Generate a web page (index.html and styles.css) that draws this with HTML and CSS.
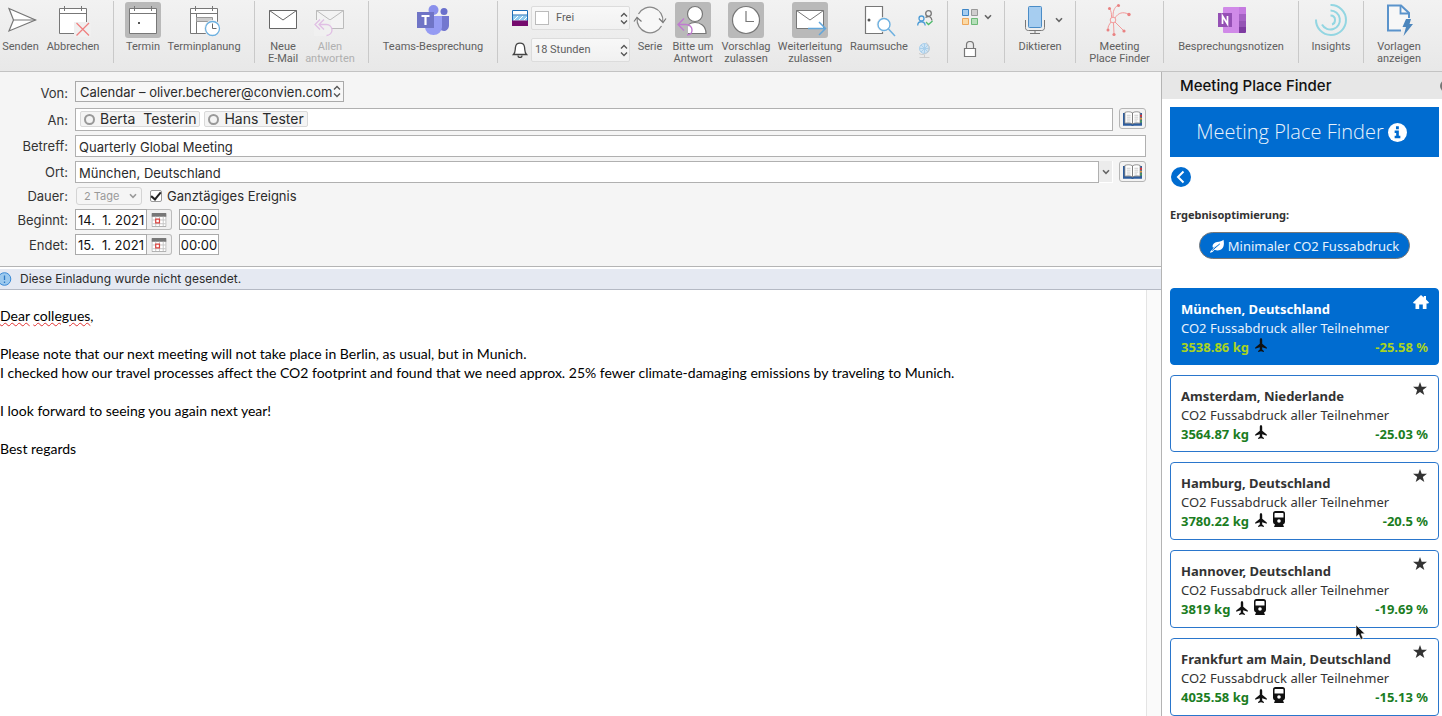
FILE: index.html
```html
<!DOCTYPE html>
<html lang="de">
<head>
<meta charset="utf-8">
<title>Quarterly Global Meeting</title>
<link rel="stylesheet" href="styles.css">
</head>
<body>
<svg class="defs" aria-hidden="true">
  <symbol id="plane" viewBox="0 0 12 14"><path d="M6 0c.8 0 1.200 1 1.200 2v3.800l4.600 3.700v1.300L7.200 9.300v2.300l1.700 1.400v1L6 13.200l-2.900.8v-1l1.700-1.400V9.300L.2 10.800V9.500L4.800 5.800V2C4.800 1 5.200 0 6 0z"/></symbol>
  <symbol id="train" viewBox="0 0 12 16"><path fill-rule="evenodd" d="M2.500 0h7A2.500 2.500 0 0 1 12 2.500V11a2.500 2.500 0 0 1-2 2.400L11 16H1L2 13.400A2.500 2.500 0 0 1 0 11V2.500A2.500 2.500 0 0 1 2.500 0zM2.200 2a.7.7 0 0 0-.7.7V6.500h9V2.700a.7.700 0 0 0-.7-.7zM6 8.200a1.800 1.800 0 1 0 0 3.600 1.800 1.800 0 0 0 0-3.600z"/></symbol>
  <symbol id="star" viewBox="0 0 14 13"><path d="M7 0l1.700 4.800H14L9.800 7.900l1.500 5L7 9.900l-4.300 3 1.500-5L0 4.800h5.300z"/></symbol>
  <symbol id="updown" viewBox="0 0 8 13"><path d="M1 4.500l3-3 3 3M1 8.500l3 3 3-3" fill="none" stroke="currentColor" stroke-width="1.300"/></symbol>
  <symbol id="down" viewBox="0 0 8 6"><path d="M1 1.300l3 3 3-3" fill="none" stroke="currentColor" stroke-width="1.600"/></symbol>
  <symbol id="book" viewBox="0 0 20 16"><path d="M0 2h3v11h6l1 1 1-1h6V2h3v13.500h-8.500l-1.500.5-1.500-.5H0z" fill="#2c5c9e"/><path d="M2 1.500C4.500.5 8 .5 10 2c2-1.500 5.500-1.500 8-.5v11.500c-3-.8-6-.8-8 .8-2-1.600-5-1.600-8-.8z" fill="#fff" stroke="#777" stroke-width=".8"/><path d="M10 2v11.500" stroke="#777"/><path d="M4 4.500h4M4 6.500h4M4 8.500h4M4 10.500h4M12 4.500h4M12 6.500h4M12 8.500h4M12 10.500h3" stroke="#bbb" stroke-width=".8"/><path d="M18 4h2v2h-2z" fill="#d33"/><path d="M18 7h2v2h-2z" fill="#e8a33a"/><path d="M18 10h2v2h-2z" fill="#4a9c57"/></symbol>
  <symbol id="minical" viewBox="0 0 16 16"><path d="M.5 2.500h15v13H.5z" fill="#fff" stroke="#aaa"/><path d="M0 1h16v4H0z" fill="#777"/><path d="M4.500 5v10M8.500 5v10M12.500 5v10M1 8.500h14M1 12.500h14" stroke="#c4c4c4"/><path d="M4.500 7.500h4v4h-4z" fill="#fff" stroke="#d9423e" stroke-width="1.300"/></symbol>
</svg>

<header class="ribbon">
  <div class="group g-send">
    <button class="tool w-41"><svg class="icon" viewBox="0 0 36 36"><path d="M6 6.500L32.500 18 6 29l4.500-11z" fill="#fff" stroke="#777" stroke-width="1.200"/><path d="M10.500 18h22" stroke="#777" stroke-width="1.200"/></svg><span>Senden</span></button>
    <button class="tool w-64"><svg class="icon" viewBox="0 0 36 36"><path d="M4.500 6.500h27v25h-27z" fill="#fff" stroke="#777"/><path d="M4.500 11.500h27M9.500 4v5M26.500 4v5" stroke="#777" fill="none"/><path d="M19 20h17v15H19z" fill="#f0f0f0"/><path d="M21.500 21l12.500 12.500M34 21L21.500 33.500" stroke="#f08080" stroke-width="1.300"/></svg><span>Abbrechen</span></button>
  </div>
  <div class="group g-plan">
    <button class="tool w-42 on"><svg class="icon" viewBox="0 0 36 36"><path d="M4.500 6.500h27v25h-27z" fill="#fff" stroke="#777"/><path d="M4.500 11.500h27M9.500 4v5M26.500 4v5" stroke="#777" fill="none"/><path d="M13 20h2v2h-2z" fill="#555"/></svg><span>Termin</span></button>
    <button class="tool w-80"><svg class="icon" viewBox="0 0 36 36"><path d="M4.500 6.500h27v25h-27z" fill="#fff" stroke="#777"/><path d="M4.500 11.500h27M9.500 4v5M26.500 4v5M10.500 12v19" stroke="#777" fill="none"/><path d="M10.500 15.500h16v4h-16z" fill="#ccc" stroke="#999"/><circle cx="26.500" cy="26.500" r="8.500" fill="#f0f0f0"/><circle cx="26.500" cy="26.500" r="7" fill="#fff" stroke="#6cb0e0" stroke-width="1.300"/><path d="M26.500 21.500v5h4" fill="none" stroke="#666"/></svg><span>Terminplanung</span></button>
  </div>
  <div class="group g-mail">
    <button class="tool w-40"><svg class="icon" viewBox="0 0 36 36"><path d="M4.500 8.500h27v18h-27z" fill="#fff" stroke="#666"/><path d="M4.500 8.500L18 18 31.500 8.500" fill="none" stroke="#666"/></svg><span>Neue<br>E-Mail</span></button>
    <button class="tool w-54" disabled><svg class="icon" viewBox="0 0 36 36"><path d="M4.500 8.500h27v18h-27z" fill="#f3f3f3" stroke="#bbb"/><path d="M4.500 8.500L18 18 31.500 8.500" fill="none" stroke="#bbb"/><path d="M2 18h17v16H2z" fill="#f0f0f0"/><path d="M8 17.500L3 22.500l5 5M12 17.500L7 22.500l5 5M7.500 22.500h7a5.500 5.500 0 0 1 0 11" fill="none" stroke="#e0bfe4" stroke-width="1.300"/></svg><span>Allen<br>antworten</span></button>
  </div>
  <div class="group g-teams">
    <button class="tool"><svg class="icon" viewBox="0 0 36 36"><circle cx="18.500" cy="8" r="5" fill="#8a90ec"/><circle cx="29" cy="9.500" r="3.500" fill="#6a70cc"/><path d="M25 14h9v9c0 4-3 6-5 6s-4-1-4-4z" fill="#7377cf"/><path d="M10 14h17v11a8.500 8 0 0 1-17 0z" fill="#959bf3"/><path d="M2 10h17v16H2z" fill="#6f74c6"/><path d="M6.500 14h8M10.500 14v9" stroke="#fff" stroke-width="2.200"/></svg><span>Teams-Besprechung</span></button>
  </div>
  <div class="group g-status">
    <div class="pickers">
      <label class="pick"><svg class="pick-icon" viewBox="0 0 16 16"><path d="M.5.5h15v15H.5z" fill="#fff" stroke="#1d6eb8"/><path d="M1 5.500h14v5H1z" fill="#8fcbee"/><path d="M2 10l4-4M7 10l4-4M12 10l3-3" stroke="#fff"/><path d="M1 5h14" stroke="#1d6eb8"/><path d="M0 10.500h16V16H0z" fill="#750a6e"/></svg>
        <span class="box"><i class="swatch"></i><select aria-label="Status"><option>Frei</option></select><svg class="ud"><use href="#updown"/></svg></span></label>
      <label class="pick"><svg class="pick-icon" viewBox="0 0 16 16"><path d="M1.500 12.500c2-2 1.500-4 2-7.500A4.500 4.500 0 0 1 8 1.200 4.500 4.500 0 0 1 12.500 5c.5 3.500 0 5.500 2 7.500z" fill="#fff" stroke="#444" stroke-width="1.300"/><path d="M6 13.500a2 2 0 0 0 4 0" fill="none" stroke="#444" stroke-width="1.300"/></svg>
        <span class="box"><select aria-label="Erinnerung"><option>18 Stunden</option></select><svg class="ud"><use href="#updown"/></svg></span></label>
    </div>
    <button class="tool w-32"><svg class="icon" viewBox="0 0 36 36"><circle cx="18" cy="18" r="12" fill="#f7f7f7"/><path d="M6.500 12A13 13 0 0 1 30.800 20M29.500 24A13 13 0 0 1 5.200 16" fill="none" stroke="#888" stroke-width="1.200"/><path d="M27 16.500l4 4 3-4M2 19.500l3-4 4.500 4" fill="none" stroke="#777" stroke-width="1.200"/></svg><span>Serie</span></button>
    <button class="tool w-46 on"><svg class="icon" viewBox="0 0 36 36"><circle cx="20" cy="12" r="7.500" fill="#fff" stroke="#777" stroke-width="1.200"/><path d="M12 31.500v-4c0-5 3-7 8-7s11 3 11 11z" fill="#fff" stroke="#777" stroke-width="1.200"/><path d="M2 18h11v14H2z" fill="#b9b9b9"/><path d="M9 16.500L3 22.500l6 6M3 22.500h8c4 0 6 3 6 5.500s-1.500 5-5 5" fill="none" stroke="#c07bd0" stroke-width="1.400"/></svg><span>Bitte um<br>Antwort</span></button>
    <button class="tool w-52 on"><svg class="icon" viewBox="0 0 36 36"><circle cx="18" cy="18" r="13.500" fill="#fff" stroke="#777" stroke-width="1.200"/><path d="M18 9v10.500h8" fill="none" stroke="#777" stroke-width="1.200"/></svg><span>Vorschlag<br>zulassen</span></button>
    <button class="tool w-68 on"><svg class="icon" viewBox="0 0 36 36"><path d="M4.500 8.500h27v18h-27z" fill="#fff" stroke="#777"/><path d="M4.500 8.500L18 18 31.500 8.500" fill="none" stroke="#777"/><path d="M16 26.500h17M27 20l6.500 6.500L27 33" fill="none" stroke="#62a6da" stroke-width="1.500"/></svg><span>Weiterleitung<br>zulassen</span></button>
    <button class="tool w-62"><svg class="icon" viewBox="0 0 36 36"><path d="M4.500 4.500h17v27h-17z" fill="#fff" stroke="#777" stroke-width="1.200"/><circle cx="8" cy="18" r="1.500" fill="#555"/><circle cx="23" cy="22.500" r="7.500" fill="#f0f0f0"/><circle cx="23" cy="22.500" r="6" fill="#fff" stroke="#6cb0e0" stroke-width="1.400"/><path d="M27.500 27l6.500 7" stroke="#6cb0e0" stroke-width="1.500"/></svg><span>Raumsuche</span></button>
    <div class="stack">
      <button class="mini" aria-label="Teilnehmer"><svg viewBox="0 0 16 16" width="16" height="16" fill="none" stroke-width="1.300"><circle cx="11.500" cy="3.500" r="2.800" stroke="#777"/><path d="M8.500 7.500c3-2 6-1 6.500 3" stroke="#777"/><circle cx="4.500" cy="8.500" r="2.500" stroke="#4b9bd6"/><path d="M.7 15.500c0-5 7-5 7.500 0" stroke="#4b9bd6"/><path d="M9 12l2.500 2.500L15.500 11" stroke="#4cba6a"/></svg></button>
      <button class="mini" aria-label="Zeitzone" disabled><svg viewBox="0 0 16 16" width="16" height="16" fill="none"><circle cx="7.500" cy="6.500" r="5" fill="#cfe4f4" stroke="#a9cfeb"/><path d="M2.500 6.500h10M7.500 1.500v10M4 3l7 7M11 3l-7 7" stroke="#a9cfeb"/><path d="M9 .5a6.500 6.500 0 1 1-7 11M7.500 13v2.500M2.500 15.500h10" stroke="#ccc"/></svg></button>
    </div>
  </div>
  <div class="group g-cat">
    <button class="mini" aria-label="Kategorisieren"><svg viewBox="0 0 16 16" width="16" height="16"><path d="M.5.5h6v6h-6z" fill="#a6cdf0" stroke="#3f86c6"/><path d="M9.500.5h6v6h-6z" fill="#d0cece" stroke="#999"/><path d="M.5 9.500h6v6h-6z" fill="#fbd9a4" stroke="#eda65b"/><path d="M9.500 9.500h6v6h-6z" fill="#b5dfb9" stroke="#6db877"/></svg><svg class="dn"><use href="#down"/></svg></button>
    <button class="mini" aria-label="Privat"><svg viewBox="0 0 16 16" width="16" height="16" fill="none" stroke="#777" stroke-width="1.200"><path d="M2.500 7.500h11v8h-11z" fill="#fff"/><path d="M4.500 7.500V4a3.500 3.500 0 0 1 7 0v3.500"/></svg></button>
  </div>
  <div class="group g-dict">
    <button class="tool"><span class="with-arrow"><svg class="icon" viewBox="0 0 36 36"><path d="M12.500 4.500h11a1 1 0 0 1 1 1v19a1 1 0 0 1-1 1h-11a1 1 0 0 1-1-1v-19a1 1 0 0 1 1-1z" fill="#a6cdf0" stroke="#4a8cc7"/><path d="M8.500 18v7.500c0 2 1 3 3 3h13c2 0 3-1 3-3V18M18 28.500v3M13 31.500h10" fill="none" stroke="#777"/></svg><svg class="dn"><use href="#down"/></svg></span><span>Diktieren</span></button>
  </div>
  <div class="group g-mpf">
    <button class="tool"><svg class="icon" viewBox="0 0 36 36" fill="none" stroke="#f29a9a"><circle cx="12" cy="18" r="2.800"/><path d="M12 15c0-6 1-9 5-12M10.500 15.500c0-4 0-6-2-9M14 16c3-5 8-7 14-3.500M14 20l9 9M12.500 21l.5 11M10 20c-2 3-3 4-3 7"/><g fill="#e98282" stroke="none"><circle cx="17.500" cy="3.500" r="1.500"/><circle cx="8.500" cy="6.500" r="1.500"/><circle cx="28" cy="12.500" r="1.700"/><circle cx="23" cy="29" r="1.600"/><circle cx="13" cy="32.500" r="1.600"/><circle cx="7" cy="28" r="1.500"/></g></svg><span>Meeting<br>Place Finder</span></button>
  </div>
  <div class="group g-notes">
    <button class="tool"><svg class="icon" viewBox="0 0 36 36"><path d="M11 5h21a1 1 0 0 1 1 1v25H11a1 1 0 0 1-1-1V6a1 1 0 0 1 1-1z" fill="#d08ae8"/><path d="M26 5h6a1 1 0 0 1 1 1v7h-7z" fill="#c57be0"/><path d="M26 12h7v7h-7z" fill="#a561c4"/><path d="M26 19h7v6h-7z" fill="#9554b5"/><path d="M26 25h7v5l-1 1h-6z" fill="#7d3ba0"/><path d="M5 11h14v14H5z" fill="#9550b5"/><path d="M9.500 22v-8l5 8v-8" fill="none" stroke="#fff" stroke-width="1.700"/></svg><span>Besprechungsnotizen</span></button>
  </div>
  <div class="group g-insights">
    <button class="tool"><svg class="icon" viewBox="0 0 36 36" fill="none" stroke="#93d6e2" stroke-width="2"><path d="M17.500 3A15 15 0 1 1 3 17.500"/><path d="M17.500 8.500a9.500 9.500 0 1 1-8.500 14"/><path d="M17.500 13.500c3 0 4.500 1.500 4.500 4.500s-1 4-3 4.500"/></svg><span>Insights</span></button>
  </div>
  <div class="group g-tpl">
    <button class="tool"><svg class="icon" viewBox="0 0 36 36"><path d="M20 28.500H7v-25h13l8 7.500v5" fill="#f7f7f7" stroke="#5a93cb" stroke-width="2"/><path d="M19.500 4v7.500H28" fill="none" stroke="#5a93cb" stroke-width="1.800"/><path d="M25 17h5l-1.500 5H32l-9.500 12 2.500-9h-3.500z" fill="#4c86bd"/></svg><span>Vorlagen<br>anzeigen</span></button>
  </div>
</header>

<main class="window">
  <section class="compose">
    <form class="fields">
      <label for="von">Von:</label>
      <div class="row r-tall"><span class="from"><select id="von"><option>Calendar – oliver.becherer@convien.com</option></select><svg class="ud"><use href="#updown"/></svg></span></div>

      <label for="an">An:</label>
      <div class="row r-tall">
        <div class="field tokens"><span class="token"><i></i>Berta&nbsp; Testerin</span><span class="token"><i></i>Hans Tester</span><input id="an" type="text"></div>
        <button type="button" class="book" aria-label="Adressbuch"><svg viewBox="0 0 20 16"><use href="#book"/></svg></button>
      </div>

      <label for="betreff">Betreff:</label>
      <div class="row"><input class="field" id="betreff" type="text" value="Quarterly Global Meeting"></div>

      <label for="ort">Ort:</label>
      <div class="row">
        <div class="combo"><input class="field" id="ort" type="text" value="München, Deutschland"><button type="button" class="drop" aria-label="Orte"><svg class="dn"><use href="#down"/></svg></button></div>
        <button type="button" class="book" aria-label="Raumliste"><svg viewBox="0 0 20 16"><use href="#book"/></svg></button>
      </div>

      <label for="dauer">Dauer:</label>
      <div class="row r-low"><span class="duration"><select id="dauer" disabled><option>2 Tage</option></select><svg class="dn"><use href="#down"/></svg></span><label class="allday"><input type="checkbox" checked>Ganztägiges Ereignis</label></div>

      <label for="beginnt">Beginnt:</label>
      <div class="row r-date"><input class="date" id="beginnt" type="text" value="14. &nbsp;1. 2021"><button type="button" class="cal" aria-label="Startdatum"><svg viewBox="0 0 16 16"><use href="#minical"/></svg></button><input class="time" type="text" value="00:00" aria-label="Startzeit"></div>

      <label for="endet">Endet:</label>
      <div class="row r-date"><input class="date" id="endet" type="text" value="15. &nbsp;1. 2021"><button type="button" class="cal" aria-label="Enddatum"><svg viewBox="0 0 16 16"><use href="#minical"/></svg></button><input class="time" type="text" value="00:00" aria-label="Endzeit"></div>
    </form>

    <div class="notice"><svg viewBox="0 0 12 14"><circle cx="4.500" cy="7" r="6.300" fill="#9cc9ee" stroke="#3a8ad6"/><path d="M4.500 3.500v4.500M4.500 9.500v1.500" stroke="#2d78c4" stroke-width="1.300"/></svg><span>Diese Einladung wurde nicht gesendet.</span></div>

    <div class="editor">
      <article class="message" lang="en">
        <p><span class="typo">Dear</span> <span class="typo">collegues</span>,</p>
        <p>Please note that our next meeting will not take place in Berlin, as usual, but in Munich.<br>I checked how our travel processes affect the CO2 footprint and found that we need approx. 25% fewer climate-damaging emissions by traveling to Munich.</p>
        <p>I look forward to seeing you again next year!</p>
        <p>Best regards</p>
      </article>
      <div class="track"></div>
    </div>
  </section>

  <aside class="pane">
    <div class="pane-title"><span>Meeting Place Finder</span><button aria-label="Schließen"></button></div>
    <div class="pane-body">
      <h1>Meeting Place Finder <svg viewBox="0 0 20 20"><circle cx="10" cy="10" r="10" fill="#fff"/><path d="M8.400 3.500h3v3h-3zM7 8h4.400v5.500H13V16H7v-2.500h1.600v-3H7z" fill="#006cd0"/></svg></h1>
      <button class="back" aria-label="Zurück"><svg viewBox="0 0 20 20"><path d="M12.500 4.500L7 10l5.500 5.500" fill="none" stroke="#fff" stroke-width="2"/></svg></button>
      <h2>Ergebnisoptimierung:</h2>
      <button class="pill"><svg viewBox="0 0 14 14"><path d="M13.500.8c.8 4 .5 7-1.500 9s-5 2-7.500 1L2.500 13 .3 13.700 0 13l4-4.500L9.500 5 3 8.700C1.500 6 4 3.500 7 3c3-.4 4.500-.7 6.500-2.200z" fill="#fff"/><path d="M2 11.500L9.800 4.900" stroke="#006cd0" stroke-width="1"/></svg>Minimaler CO2 Fussabdruck</button>
      <ul class="places">
        <li class="place best"><strong>München, Deutschland</strong><span>CO2 Fussabdruck aller Teilnehmer</span><div class="figures"><b>3538.86 kg</b><svg class="pl"><use href="#plane"/></svg><b class="pct">-25.58 %</b></div><svg class="mark" viewBox="0 0 16 14"><path d="M8 0l2.800 2.600V1H13v3.600L16 7.500l-.8.9H13.500V14H9.800V9.500H6.200V14H2.500V8.400H.8L0 7.500z"/></svg></li>
        <li class="place"><strong>Amsterdam, Niederlande</strong><span>CO2 Fussabdruck aller Teilnehmer</span><div class="figures"><b>3564.87 kg</b><svg class="pl"><use href="#plane"/></svg><b class="pct">-25.03 %</b></div><svg class="mark"><use href="#star"/></svg></li>
        <li class="place"><strong>Hamburg, Deutschland</strong><span>CO2 Fussabdruck aller Teilnehmer</span><div class="figures rail"><b>3780.22 kg</b><svg class="pl"><use href="#plane"/></svg><svg class="tr"><use href="#train"/></svg><b class="pct">-20.5 %</b></div><svg class="mark"><use href="#star"/></svg></li>
        <li class="place"><strong>Hannover, Deutschland</strong><span>CO2 Fussabdruck aller Teilnehmer</span><div class="figures rail"><b>3819 kg</b><svg class="pl"><use href="#plane"/></svg><svg class="tr"><use href="#train"/></svg><b class="pct">-19.69 %</b></div><svg class="mark"><use href="#star"/></svg></li>
        <li class="place"><strong>Frankfurt am Main, Deutschland</strong><span>CO2 Fussabdruck aller Teilnehmer</span><div class="figures rail"><b>4035.58 kg</b><svg class="pl"><use href="#plane"/></svg><svg class="tr"><use href="#train"/></svg><b class="pct">-15.13 %</b></div><svg class="mark"><use href="#star"/></svg></li>
      </ul>
    </div>
    <svg class="pointer" viewBox="0 0 12 17"><path d="M1 1v12l2.800-2.500 2 5 2.300-1-2-4.700H10z" fill="#111" stroke="#fff" stroke-width=".6"/></svg>
  </aside>
</main>
</body>
</html>
```
FILE: styles.css
```css
* { box-sizing: border-box; }
body { margin: 0; height: 100vh; overflow: hidden; display: flex; flex-direction: column; font: 13px/16px Inter, "Liberation Sans", sans-serif; color: #2b2b2b; background: #fff; }
button, input, select { font: inherit; color: inherit; margin: 0; padding: 0; border: 0; background: none; border-radius: 0; appearance: none; min-width: 0; }
svg { display: block; flex: none; }
.defs { display: none; }
.ud { width: 8px; height: 13px; color: #555; pointer-events: none; }
.dn { width: 8px; height: 6px; color: #666; pointer-events: none; }

/* Ribbon */
.ribbon { flex: none; display: flex; height: 72px; padding-top: 1px; background: linear-gradient(#f2f2f2, #e8e8e8); border-bottom: 1px solid #c3c3c3; color: #606060; font-family: Roboto, "Liberation Sans", sans-serif; font-size: 11px; line-height: 12px; }
.group { flex: none; display: flex; height: 62px; padding: 1px 0 0 8px; border-right: 1px solid #c9c9c9; }
.tool { flex: none; display: flex; flex-direction: column; align-items: center; gap: 3px; white-space: nowrap; text-align: center; }
.icon { width: 36px; height: 36px; border-radius: 3px; }
.on .icon { background: #b9b9b9; }
.tool:disabled { color: #b0b0b0; }
.w-32 { width: 32px; } .w-40 { width: 40px; } .w-41 { width: 41px; } .w-42 { width: 42px; }
.w-46 { width: 46px; } .w-52 { width: 52px; } .w-54 { width: 54px; } .w-62 { width: 62px; }
.w-64 { width: 64px; } .w-68 { width: 68px; } .w-80 { width: 80px; }
.g-send { width: 114px; padding-left: 0; }
.g-plan { width: 141px; }
.g-mail { width: 114px; }
.g-teams, .g-dict, .g-mpf, .g-notes, .g-insights, .g-tpl { padding-left: 0; justify-content: center; }
.g-teams { width: 129px; }
.g-status { width: 450px; padding-left: 14px; gap: 4px; }
.g-cat { width: 57px; padding: 8px 0 0 14px; flex-direction: column; gap: 16px; }
.g-dict { width: 71px; }
.g-mpf { width: 88px; }
.g-notes { width: 135px; }
.g-insights { width: 65px; }
.g-tpl { width: 70px; border-right: 0; }
.pickers { display: flex; flex-direction: column; gap: 8px; width: 118px; padding-top: 4px; }
.pick { display: flex; align-items: center; gap: 3px; height: 24px; }
.pick-icon { width: 16px; height: 16px; }
.box { flex: 1; display: flex; align-items: center; gap: 4px; min-width: 0; height: 24px; padding: 0 1px 0 3px; border: 1px solid #dcdcdc; border-radius: 2px; background: linear-gradient(#f8f8f8, #f1f1f1); }
.box select { flex: 1; }
.swatch { width: 14px; height: 14px; margin-right: 3px; border: 1px solid #bbb; background: #fff; }
.mini { display: flex; align-items: center; gap: 6px; }
.stack { width: 22px; padding: 8px 0 0 3px; display: flex; flex-direction: column; gap: 16px; }
.with-arrow { display: flex; align-items: center; gap: 2px; }

/* Window */
.window { flex: 1; min-height: 0; display: flex; }
.compose { flex: 1; min-width: 0; display: flex; flex-direction: column; }
.fields { display: grid; grid-template-columns: 68px 1fr; column-gap: 7px; row-gap: 4px; padding: 9px 15px 11px 0; background: #f5f5f5; border-bottom: 1px solid #b4b4b4; }
.fields > label { text-align: right; align-self: center; color: #333; }
.row { display: flex; height: 22px; align-items: stretch; }
.r-tall { height: 23px; }
.r-low { height: 18px; align-items: center; }
.r-date { height: 21px; }
.field { flex: 1; padding: 2px 3px 0; background: #fff; border: 1px solid #b0b0b0; }
.from { display: flex; align-items: center; height: 21px; padding: 0 2px 0 4px; border: 1px solid #aaa; background: #f7f7f7; }
.tokens { display: flex; align-items: center; gap: 4px; padding: 0 4px 1px; }
.tokens input { flex: 1; }
.token { display: flex; align-items: center; gap: 5px; height: 16px; padding: 0 3px; border: 1px solid #d9d9d9; border-radius: 2px; background: #f4f4f4; font-size: 14px; }
.token i { width: 11px; height: 11px; border: 2px solid #999; border-radius: 50%; }
.book { width: 27px; height: 21px; margin-left: 6px; padding: 2px 3px; border: 1px solid #b5b5b5; border-radius: 3px; background: #f3f3f3; }
.combo { flex: 1; display: flex; }
.drop { width: 14px; padding-left: 3px; background: #ececec; border-right: 1px solid #fff; border-bottom: 1px solid #fff; }
.duration { display: flex; align-items: center; gap: 8px; width: 66px; height: 18px; margin: 0 8px 0 1px; padding: 0 4px 0 7px; border: 1px solid #d4d4d4; border-radius: 3px; font-size: 11px; color: #999; }
.duration select { flex: 1; opacity: 1; }
.duration .dn { color: #999; }
.allday { display: flex; align-items: center; gap: 5px; }
.allday input { width: 12px; height: 12px; border: 1px solid #999; border-radius: 2px; background: #fff; display: grid; place-items: center; }
.allday input:checked::after { content: ""; width: 4px; height: 8px; margin-top: -2px; border: solid #222; border-width: 0 2px 2px 0; transform: rotate(40deg); }
.date, .time { color: #111; background: #fff; border: 1px solid #aaa; }
.date { width: 72px; padding-left: 2px; }
.time { width: 40px; margin-left: 7px; text-align: center; }
.cal { width: 25px; padding: 2px 4px; border: 1px solid #bbb; border-left: 0; border-radius: 0 3px 3px 0; background: #f0f0f0; }
.cal svg { width: 16px; height: 15px; }
.notice { display: flex; align-items: center; gap: 8px; margin-top: 2px; height: 21px; background: #e5e9f2; border-bottom: 1px solid #b4b9c4; font-size: 12px; }
.notice svg { width: 12px; height: 14px; }
.editor { flex: 1; min-height: 0; display: flex; }
.message { flex: 1; padding-top: 16px; font: 14px/19px Lato, "Liberation Sans", sans-serif; color: #000; }
.message p { margin: 0 0 19px; }
.typo { text-decoration: underline wavy #e03030 1px; }
.track { width: 15px; background: #fafafa; border-left: 1px solid #e4e4e4; }

/* Task pane */
.pane { position: relative; flex: none; width: 281px; border-left: 1px solid #b4b4b4; background: #fff; color: #333; font-family: "Noto Sans", "Open Sans", sans-serif; }
.pane-title { display: flex; align-items: center; justify-content: space-between; height: 27px; padding-left: 18px; overflow: hidden; background: #e7e7e7; font: 500 15px/27px Inter, "Liberation Sans", sans-serif; color: #111; }
.pane-title button { flex: none; width: 12px; height: 12px; margin-right: -10px; border-radius: 50%; background: #777; }
.pane-body { padding: 8px 3px 0 8px; }
.pane h1 { display: flex; align-items: center; justify-content: center; gap: 4px; height: 50px; margin: 0; padding-right: 6px; background: #006cd0; color: #e8f2fc; font: 300 20px/50px "Open Sans", "Noto Sans", sans-serif; }
.pane h1 svg { width: 19px; height: 19px; }
.back { display: block; width: 20px; height: 20px; margin: 10px 0 0 1px; border-radius: 50%; background: #006cd0; }
.pane h2 { margin: 20px 0 9px; font-size: 11px; line-height: 16px; font-weight: 700; }
.pill { display: flex; align-items: center; gap: 4px; height: 27px; margin: 0 auto; padding: 0 10px; border: 1px solid #777; border-radius: 14px; background: #006cd0; color: #e8f2fc; font-size: 13px; }
.pill svg { width: 14px; height: 14px; }
.places { display: grid; gap: 10px; margin: 29px 0 0; padding: 0; list-style: none; }
.place { position: relative; display: flex; flex-direction: column; padding: 11px 10px 8px; border: 1px solid #2a76cc; border-radius: 4px; font-size: 13px; line-height: 19px; white-space: nowrap; }
.place strong { font-weight: 700; }
.figures { display: flex; align-items: center; gap: 6px; height: 18px; color: #1b7d1f; fill: #111; }
.figures.rail { height: 19px; }
.pct { margin-left: auto; }
.pl { width: 12px; height: 14px; margin-top: -4px; }
.tr { width: 12px; height: 16px; margin-top: -6px; }
.mark { position: absolute; top: 6px; right: 11px; width: 14px; height: 13px; fill: #333; }
.best { background: #006cd0; border-color: #006cd0; color: #e8f2fc; }
.best strong { color: #fff; }
.best .figures { color: #a9d31e; }
.best .mark { right: 9px; width: 16px; height: 14px; fill: #fff; }
.pointer { position: absolute; left: 193px; top: 552px; width: 12px; height: 17px; }
```
